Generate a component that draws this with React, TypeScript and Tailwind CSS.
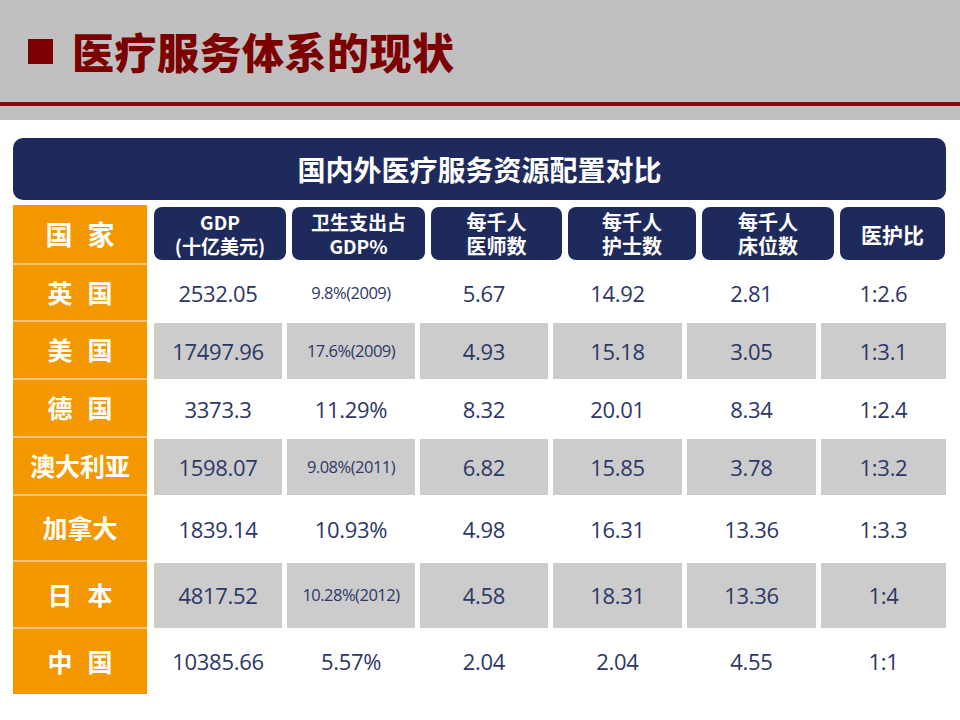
import React from "react";

const CJK = { fontFamily: '"Noto Sans CJK SC", "Noto Sans", sans-serif' };
const NUM = { fontFamily: '"Open Sans", "Noto Sans CJK SC", sans-serif' };

type Cell = { v: string; small?: boolean };

interface Row {
  name: string[];
  h: string;
  gray: boolean;
  cells: Cell[];
}

const rows: Row[] = [
  {
    name: ["英", "国"],
    h: "h-[57px]",
    gray: false,
    cells: [
      { v: "2532.05" },
      { v: "9.8%(2009)", small: true },
      { v: "5.67" },
      { v: "14.92" },
      { v: "2.81" },
      { v: "1:2.6" },
    ],
  },
  {
    name: ["美", "国"],
    h: "h-[58px]",
    gray: true,
    cells: [
      { v: "17497.96" },
      { v: "17.6%(2009)", small: true },
      { v: "4.93" },
      { v: "15.18" },
      { v: "3.05" },
      { v: "1:3.1" },
    ],
  },
  {
    name: ["德", "国"],
    h: "h-[58px]",
    gray: false,
    cells: [
      { v: "3373.3" },
      { v: "11.29%" },
      { v: "8.32" },
      { v: "20.01" },
      { v: "8.34" },
      { v: "1:2.4" },
    ],
  },
  {
    name: ["澳大利亚"],
    h: "h-[58px]",
    gray: true,
    cells: [
      { v: "1598.07" },
      { v: "9.08%(2011)", small: true },
      { v: "6.82" },
      { v: "15.85" },
      { v: "3.78" },
      { v: "1:3.2" },
    ],
  },
  {
    name: ["加拿大"],
    h: "h-[66px]",
    gray: false,
    cells: [
      { v: "1839.14" },
      { v: "10.93%" },
      { v: "4.98" },
      { v: "16.31" },
      { v: "13.36" },
      { v: "1:3.3" },
    ],
  },
  {
    name: ["日", "本"],
    h: "h-[67px]",
    gray: true,
    cells: [
      { v: "4817.52" },
      { v: "10.28%(2012)", small: true },
      { v: "4.58" },
      { v: "18.31" },
      { v: "13.36" },
      { v: "1:4" },
    ],
  },
  {
    name: ["中", "国"],
    h: "h-[65px]",
    gray: false,
    cells: [
      { v: "10385.66" },
      { v: "5.57%" },
      { v: "2.04" },
      { v: "2.04" },
      { v: "4.55" },
      { v: "1:1" },
    ],
  },
];

const headers = [
  { lines: ["GDP", "(十亿美元)"], w: "w-[132px]", size: "text-[19px]" },
  { lines: ["卫生支出占", "GDP%"], w: "w-[133px]", size: "text-[19px]" },
  { lines: ["每千人", "医师数"], w: "w-[131px]", size: "text-[20px]" },
  { lines: ["每千人", "护士数"], w: "w-[128px]", size: "text-[20px]" },
  { lines: ["每千人", "床位数"], w: "w-[132px]", size: "text-[20px]" },
  { lines: ["医护比"], w: "w-[105px]", size: "text-[21px]" },
];

function CountryCell({
  name,
  last,
  big,
}: {
  name: string[];
  last?: boolean;
  big?: boolean;
}) {
  return (
    <div
      className={`flex w-[134px] shrink-0 items-center justify-center gap-[15px] bg-[#f39800] font-bold text-white ${
        big ? "text-[27px]" : "text-[25px]"
      } ${last ? "" : "border-b-2 border-[#f8c27c]"}`}
      style={CJK}
    >
      {name.map((n) => (
        <span key={n}>{n}</span>
      ))}
    </div>
  );
}

export default function App() {
  return (
    <div className="relative h-[720px] w-[960px] overflow-hidden bg-white">
      {/* Title band */}
      <div className="flex h-[102px] items-center bg-[#c0c0c0] pl-[28px]">
        <div className="h-[25px] w-[25px] bg-[#7d0000]" />
        <h1
          className="ml-[19px] text-[42px] font-black leading-none tracking-[0.5px] text-[#7d0000]"
          style={CJK}
        >
          医疗服务体系的现状
        </h1>
      </div>
      <div className="h-[4px] bg-[#8a0b0b]" />
      <div className="h-[14px] bg-[#c0c0c0]" />

      <div className="pt-[18px] pl-[13px]">
        {/* Banner */}
        <div
          className="flex h-[62px] w-[933px] items-center justify-center rounded-[10px] bg-[#1f2a5c] text-[28px] font-bold text-white"
          style={CJK}
        >
          国内外医疗服务资源配置对比
        </div>

        <div className="mt-[5px] flex flex-col">
          {/* Header row */}
          <div className="flex h-[60px]">
            <CountryCell name={["国", "家"]} big />
            <div className="ml-[7px] flex gap-[6px] pt-[2px] pb-[5px]">
              {headers.map((h) => (
                <div
                  key={h.lines.join("")}
                  className={`flex ${h.w} flex-col items-center justify-center rounded-[8px] bg-[#1f2a5c] font-bold leading-[24px] text-white ${h.size}`}
                  style={CJK}
                >
                  {h.lines.map((l) => (
                    <span key={l}>{l}</span>
                  ))}
                </div>
              ))}
            </div>
          </div>

          {/* Data rows */}
          {rows.map((r, i) => (
            <div key={r.name.join("")} className={`flex ${r.h}`}>
              <CountryCell name={r.name} last={i === rows.length - 1} />
              <div className="ml-[7px] grid grid-cols-[128px_128px_128px_129px_129px_125px] gap-x-[5px] py-[1px]">
                {r.cells.map((c, j) => (
                  <div
                    key={j}
                    className={`flex items-center justify-center text-[#2c3766] ${
                      c.small
                        ? "text-[16.5px] tracking-[-0.5px]"
                        : "text-[22px] tracking-[-0.3px]"
                    } ${r.gray ? "bg-[#cccccc]" : ""}`}
                    style={NUM}
                  >
                    {c.v}
                  </div>
                ))}
              </div>
            </div>
          ))}
        </div>
      </div>
    </div>
  );
}
